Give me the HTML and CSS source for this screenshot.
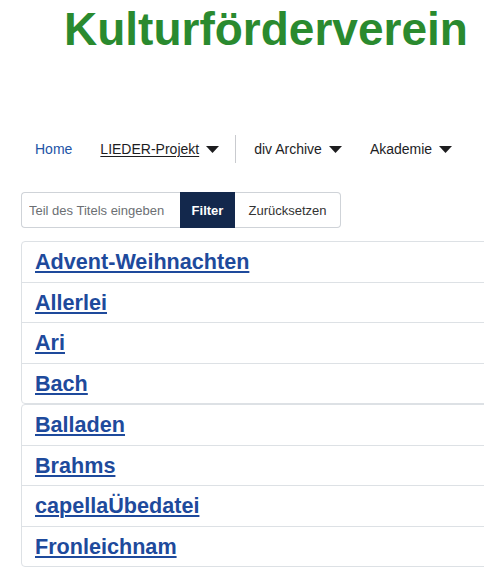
FILE: index.html
```html
<!DOCTYPE html>
<html lang="de">
<head>
<meta charset="utf-8">
<title>Kulturförderverein</title>
<link rel="stylesheet" href="styles.css">
</head>
<body>
<div class="page">
  <header class="brand">Kulturförderverein</header>

  <nav class="nav">
    <a class="nav-link active" href="#">Home</a>
    <a class="nav-link dropdown" href="#"><span class="u">LIEDER-Projekt</span><svg class="caret" width="13" height="7" viewBox="0 0 13 7"><path d="M0 0H13L6.5 7Z" fill="#1d1d1f"/></svg></a>
    <span class="divider"></span>
    <a class="nav-link dropdown" href="#"><span>div Archive</span><svg class="caret" width="13" height="7" viewBox="0 0 13 7"><path d="M0 0H13L6.5 7Z" fill="#1d1d1f"/></svg></a>
    <a class="nav-link dropdown" href="#"><span>Akademie</span><svg class="caret" width="13" height="7" viewBox="0 0 13 7"><path d="M0 0H13L6.5 7Z" fill="#1d1d1f"/></svg></a>
  </nav>

  <form class="search">
    <input class="search-input" type="text" placeholder="Teil des Titels eingeben">
    <button class="btn btn-primary" type="button">Filter</button>
    <button class="btn btn-outline" type="button">Zurücksetzen</button>
  </form>

  <div class="lists">
    <ul class="list-group">
      <li class="item"><a href="#">Advent-Weihnachten</a></li>
      <li class="item"><a href="#">Allerlei</a></li>
      <li class="item"><a href="#">Ari</a></li>
      <li class="item"><a href="#">Bach</a></li>
    </ul>
    <ul class="list-group">
      <li class="item"><a href="#">Balladen</a></li>
      <li class="item"><a href="#">Brahms</a></li>
      <li class="item"><a href="#">capellaÜbedatei</a></li>
      <li class="item"><a href="#">Fronleichnam</a></li>
    </ul>
  </div>
</div>
</body>
</html>
```

FILE: styles.css
```css
html, body {
  margin: 0;
  padding: 0;
  overflow: hidden;
  background: #ffffff;
}

body {
  font-family: "Liberation Sans", Arial, Helvetica, sans-serif;
  color: #1d1d1f;
}

.page {
  width: 484px;
  overflow: hidden;
}

.brand {
  margin-top: 6px;
  padding-left: 64px;
  font-size: 46px;
  line-height: 46px;
  font-weight: bold;
  color: #2a8a2f;
  white-space: nowrap;
}

.nav {
  display: flex;
  align-items: center;
  height: 28px;
  margin-top: 83px;
  margin-left: 21px;
}

.nav-link {
  display: flex;
  align-items: center;
  padding: 0 14px;
  font-size: 14px;
  line-height: 28px;
  color: #1d1d1f;
  text-decoration: none;
  white-space: nowrap;
}

.nav-link.active {
  color: #2254a6;
}

.nav-link .u {
  text-decoration: underline;
  text-underline-offset: 2px;
}

.caret {
  margin-left: 7px;
  display: block;
}

.divider {
  width: 1px;
  height: 28px;
  background: #c9cbcf;
  margin: 0 4px 0 2px;
}

.search {
  display: flex;
  height: 36px;
  margin: 29px 0 0 21px;
  width: 320px;
}

.search-input {
  box-sizing: border-box;
  width: 159px;
  height: 36px;
  margin: 0;
  padding: 0 7px;
  border: 1px solid #cfd3d8;
  border-right: none;
  border-radius: 4px 0 0 4px;
  font-family: "Liberation Sans", Arial, sans-serif;
  font-size: 13px;
  color: #333;
  outline: none;
}

.search-input::placeholder {
  color: #6c6f73;
}

.btn {
  box-sizing: border-box;
  height: 36px;
  margin: 0;
  font-family: "Liberation Sans", Arial, sans-serif;
  font-size: 13px;
  cursor: pointer;
}

.btn-primary {
  width: 55px;
  padding: 0;
  background: #13284c;
  border: 1px solid #13284c;
  color: #ffffff;
  font-weight: bold;
}

.btn-outline {
  width: 106px;
  padding: 0;
  background: #ffffff;
  border: 1px solid #cfd3d8;
  border-left: none;
  border-radius: 0 4px 4px 0;
  color: #333;
}

.lists {
  margin: 13px 0 0 21px;
  width: 520px;
}

.list-group {
  list-style: none;
  margin: 0;
  padding: 0;
  border: 1px solid #dde1e5;
  border-radius: 4px;
}

.item {
  padding: 8px 13px;
  font-size: 21.6px;
  line-height: 23.5px;
  height: 23.5px;
  border-top: 1px solid #dde1e5;
}

.item:first-child {
  border-top: none;
}

.item a {
  font-weight: bold;
  color: #1e4a9c;
  text-decoration: underline;
  text-decoration-thickness: 2px;
  text-underline-offset: 2px;
  white-space: nowrap;
}
```
